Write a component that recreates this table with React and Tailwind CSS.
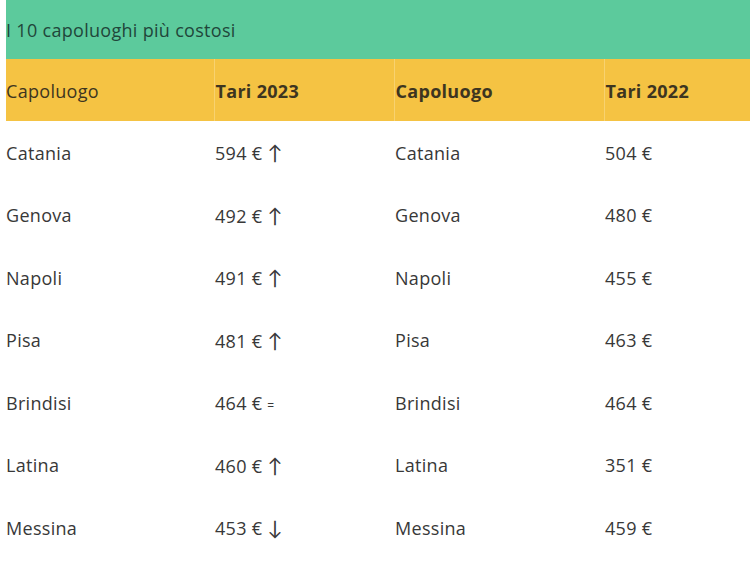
import React from 'react';

const rows = [
  { city: 'Catania', t23: '594 €', trend: '↑', city22: 'Catania', t22: '504 €' },
  { city: 'Genova', t23: '492 €', trend: '↑', city22: 'Genova', t22: '480 €' },
  { city: 'Napoli', t23: '491 €', trend: '↑', city22: 'Napoli', t22: '455 €' },
  { city: 'Pisa', t23: '481 €', trend: '↑', city22: 'Pisa', t22: '463 €' },
  { city: 'Brindisi', t23: '464 €', trend: '=', city22: 'Brindisi', t22: '464 €' },
  { city: 'Latina', t23: '460 €', trend: '↑', city22: 'Latina', t22: '351 €' },
  { city: 'Messina', t23: '453 €', trend: '↓', city22: 'Messina', t22: '459 €' },
];

const App = () => {
  return (
    <div className="w-[750px] h-[566px] overflow-hidden bg-white pl-[6px] text-[#383838] font-['Open_Sans','Lato',sans-serif] text-[18px] tracking-[0.3px]">
      <table className="w-[744px] table-fixed border-collapse">
        <colgroup>
          <col className="w-[208px]" />
          <col className="w-[180px]" />
          <col className="w-[210px]" />
          <col />
        </colgroup>
        <thead>
          <tr className="bg-[#5cca9c] h-[59px]">
            <th colSpan={4} className="text-left font-normal p-0 pt-[2px] text-[#21463a]">
              I 10 capoluoghi più costosi
            </th>
          </tr>
          <tr className="bg-[#f5c343] h-[62px]">
            <th className="text-left font-normal p-0 pt-[2px] text-[#3d3520]">Capoluogo</th>
            <th className="text-left font-bold p-0 pt-[2px] pl-px border-l border-[#f8d270] text-[#3d3520]">Tari 2023</th>
            <th className="text-left font-bold p-0 pt-[2px] pl-px border-l border-[#f8d270] text-[#3d3520]">Capoluogo</th>
            <th className="text-left font-bold p-0 pt-[2px] pl-px border-l border-[#f8d270] text-[#3d3520]">Tari 2022</th>
          </tr>
        </thead>
        <tbody>
          {rows.map((r) => (
            <tr key={r.city} className="h-[62.5px]">
              <td className="p-0 pt-[2px]">{r.city}</td>
              <td className="p-0 pt-[2px] pl-px">
                {r.t23}{' '}
                <span className={r.trend === '=' ? 'text-[12px]' : 'text-[20px]'}>{r.trend}</span>
              </td>
              <td className="p-0 pt-[2px] pl-px">{r.city22}</td>
              <td className="p-0 pt-[2px] pl-px">{r.t22}</td>
            </tr>
          ))}
        </tbody>
      </table>
    </div>
  );
};

export default App;
